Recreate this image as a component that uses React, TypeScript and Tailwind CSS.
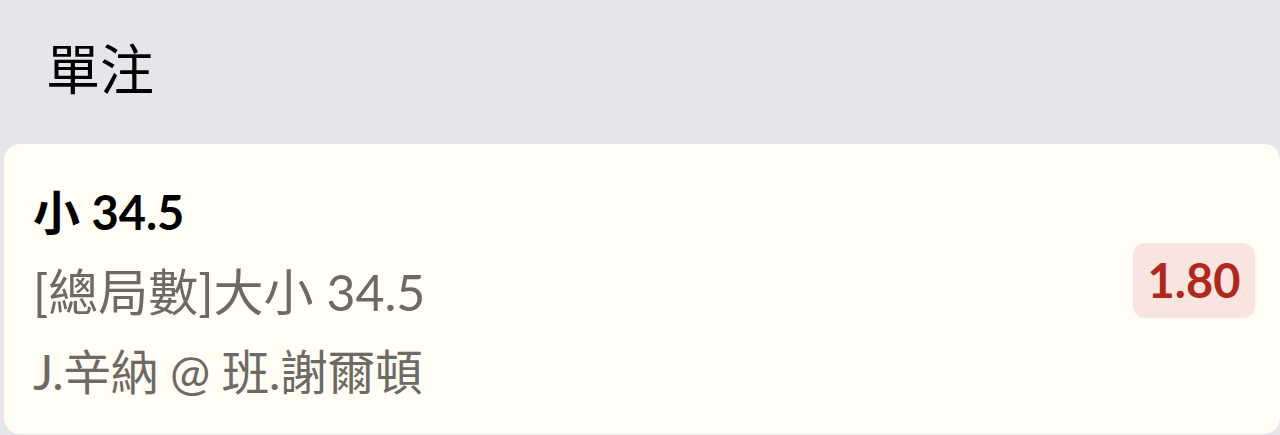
import React from 'react';

const font = { fontFamily: 'Lato, "Noto Sans CJK TC", sans-serif' };

export default function App() {
  return (
    <div className="w-[1280px] h-[435px] bg-[#e5e6e9] overflow-hidden" style={font}>
      <div className="h-[144px] flex items-center pb-[10px] pl-[46px]">
        <h1 className="text-[54px] leading-none text-black font-normal" style={{ fontFamily: '"Noto Sans CJK TC", sans-serif' }}>
          單注
        </h1>
      </div>
      <div className="ml-1 h-[290px] bg-[#fffdf4] rounded-2xl flex items-start justify-between pt-[28px] pl-[29px] pr-[25px]">
        <div className="flex flex-col">
          <div className="text-[47px] leading-[80px] font-bold text-black">小 34.5</div>
          <div className="text-[50px] leading-[80px] text-[#6d6a66]">[總局數]大小 34.5</div>
          <div className="text-[48px] leading-[80px] tracking-[-0.5px] text-[#6d6a66]">J.辛納 @ 班.謝爾頓</div>
        </div>
        <div className="mt-[71px] w-[122px] h-[75px] rounded-xl bg-[#f9e5df] flex items-center justify-center text-[47px] font-bold text-[#b1261d]">
          1.80
        </div>
      </div>
    </div>
  );
}
